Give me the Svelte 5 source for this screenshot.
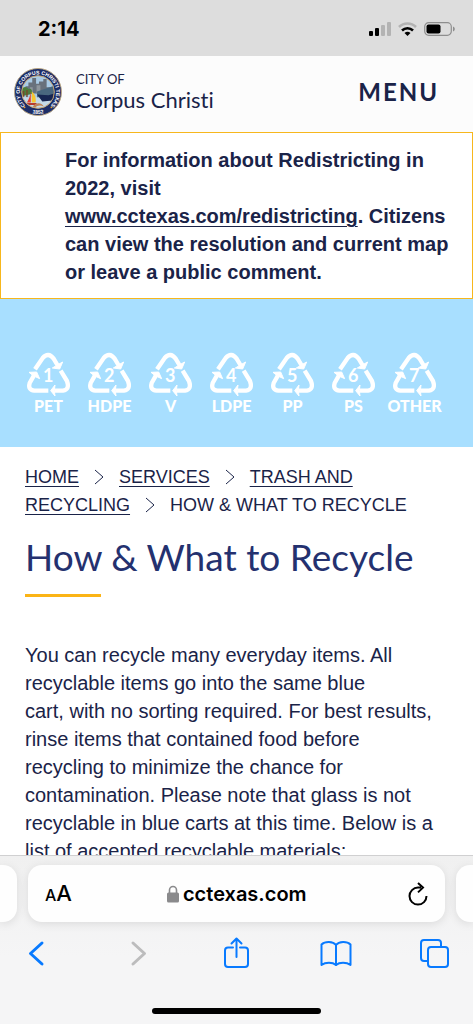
<script>
    const plastics = [
        { code: 1, label: "PET" },
        { code: 2, label: "HDPE" },
        { code: 3, label: "V" },
        { code: 4, label: "LDPE" },
        { code: 5, label: "PP" },
        { code: 6, label: "PS" },
        { code: 7, label: "OTHER" },
    ];

    let address = $state("cctexas.com");
</script>

{#snippet separator()}
    <svg class="separator" viewBox="0 0 10 16" aria-hidden="true">
        <path d="M1 1l8 7-8 7" />
    </svg>
{/snippet}

<div class="phone">
    <div class="status">
        <span class="time">2:14</span>
        <div class="indicators">
            <svg width="22" height="14" viewBox="0 0 22 14" aria-label="Signal">
                <rect x="0" y="9" width="4" height="5" rx="1" />
                <rect x="6" y="6" width="4" height="8" rx="1" />
                <rect class="faded" x="12" y="3" width="4" height="11" rx="1" />
                <rect class="faded" x="18" y="0" width="4" height="14" rx="1" />
            </svg>
            <svg width="19" height="14" viewBox="0 0 19 14" aria-label="Wi-Fi">
                <path class="wave faded-line" d="M1 5a12 12 0 0 1 17 0" />
                <path class="wave" d="M4 8.500a8 8 0 0 1 11 0" />
                <path d="M6.500 11a4.500 4.500 0 0 1 6 0L9.500 14z" />
            </svg>
            <svg width="31" height="14" viewBox="0 0 31 14" aria-label="Battery">
                <rect class="shell" x=".7" y=".7" width="26.6" height="12.6" rx="4" />
                <rect x="2.5" y="2.5" width="14" height="9" rx="2" />
                <path class="tip" d="M29 4.500c2.400 1 2.400 4 0 5z" />
            </svg>
        </div>
    </div>

    <main class="page">
        <header class="header">
            <a class="brand" href="/">
                <svg class="seal" viewBox="0 0 100 100" aria-label="City seal">
                    <defs>
                        <path id="ring-top" d="M22 77a38 38 0 1 1 56 0" />
                        <path id="ring-bottom" d="M30 91a46 46 0 0 0 40 0" />
                        <clipPath id="scene"><circle cx="50" cy="50" r="34" /></clipPath>
                    </defs>
                    <circle cx="50" cy="50" r="49" fill="#1d2e68" stroke="#b9a684" stroke-width="2" />
                    <g clip-path="url(#scene)">
                        <rect width="100" height="100" fill="#a9cbe6" />
                        <path d="M24 52V38h6v-8h8v-9h8v12h6v-5h9v-5h7v17h6l10 5v10z" fill="#68717c" />
                        <path d="M47 52V36h8v16zM33 52V40h6v12z" fill="#8e969d" />
                        <path d="M15 47c4-9 11-9 15-3 6-3 9 3 7 10l-22 5z" fill="#4c7d3d" />
                        <path d="M27 46v15M20 48v12" stroke="#754b2c" stroke-width="3" />
                        <path d="M48 49l36-12v22l-36 7z" fill="#49677f" />
                        <path d="M12 61h76v28H12z" fill="#c4d9e8" />
                        <path d="M48 55l24 2 16-5v15l-29 3z" fill="#172652" />
                        <path d="M35 49v23h-8c4-7 7-14 8-23z" fill="#e63b2f" />
                        <path d="M37 49c8 7 9 15 8 23h-8z" fill="#f7c62f" />
                        <path d="M26 73h22l-4 4H30z" fill="#b83a2d" />
                        <path d="M39 80c8-9 18-8 23 0-8-3-14-2-18 3z" fill="#bd8358" />
                    </g>
                    <circle cx="50" cy="50" r="34" fill="none" stroke="#c5a36d" stroke-width="2" />
                    <text class="seal-text"><textPath href="#ring-top" startOffset="50%">CITY OF CORPUS CHRISTI TEXAS</textPath></text>
                    <text class="seal-text"><textPath href="#ring-bottom" startOffset="50%">1852</textPath></text>
                    <circle cx="22" cy="82" r="2" fill="#e4a23a" />
                    <circle cx="78" cy="82" r="2" fill="#e4a23a" />
                </svg>
                <span class="name">
                    <span class="city-of">CITY OF</span>
                    <span class="city">Corpus Christi</span>
                </span>
            </a>
            <button class="menu">MENU</button>
        </header>

        <p class="notice">
            For information about Redistricting in 2022, visit <a href="https://www.cctexas.com/redistricting">www.cctexas.com/redistricting</a>. Citizens can view the resolution and current map or leave a public comment.
        </p>

        <ul class="plastics">
            {#each plastics as plastic}
                <li>
                    <svg class="triangle" viewBox="0 0 129 129">
                        <path class="arrow" d="M24 49L47 15Q64-4 80 17L93 39" />
                        <path class="head" d="M107 27L98 48 76 45 86 39 96 33z" />
                        <path class="arrow" d="M101 53L120 84Q129 110 108 113H82" />
                        <path class="head" d="M71 113L84 96 82 113 84 129z" />
                        <path class="arrow" d="M64 113H22Q2 111 8 90L21 67" />
                        <path class="head" d="M6 58L29 57 38 77 25 71 16 66z" />
                        <text x="64" y="86">{plastic.code}</text>
                    </svg>
                    <span>{plastic.label}</span>
                </li>
            {/each}
        </ul>

        <article class="content">
            <nav class="breadcrumbs" aria-label="Breadcrumb">
                <a href="/">HOME</a>{@render separator()}<a href="/services">SERVICES</a>{@render separator()}<a href="/services/trash">TRASH AND RECYCLING</a>{@render separator()}<span>HOW &amp; WHAT TO RECYCLE</span>
            </nav>
            <h1>How &amp; What to Recycle</h1>
            <p class="intro">
                You can recycle many everyday items. All recyclable items go into the same blue cart,&nbsp;with no sorting required. For best results, rinse items that contained food before recycling to minimize the chance for contamination. Please note that glass is not recyclable in blue carts at this time. Below is a list of accepted recyclable materials:
            </p>
        </article>
    </main>

    <footer class="browser">
        <div class="tabs">
            <div class="side left"></div>
            <div class="address">
                <button class="text-size" aria-label="Page settings"><small>A</small>A</button>
                <label class="location">
                    <svg width="12" height="18" viewBox="0 0 12 18" aria-label="Secure">
                        <path d="M2.500 8V5a3.500 3.500 0 0 1 7 0v3" fill="none" stroke="#8a8a8c" stroke-width="1.600" />
                        <rect y="7.500" width="12" height="10" rx="1.500" fill="#8a8a8c" />
                    </svg>
                    <input type="text" aria-label="Address" bind:value={address} />
                </label>
                <button class="reload" aria-label="Reload">
                    <svg width="20" height="24" viewBox="0 0 20 24">
                        <path d="M13 5.600H10a8.500 8.500 0 1 0 8.500 8.500M10 1l5 4.600-5 4.800" />
                    </svg>
                </button>
            </div>
            <div class="side right"></div>
        </div>
        <div class="toolbar">
            <button aria-label="Back">
                <svg viewBox="0 0 32 32"><path class="chevron" d="M20 6L8.500 16.500 20 27" /></svg>
            </button>
            <button aria-label="Forward" disabled>
                <svg viewBox="0 0 32 32"><path class="chevron" d="M12 6l11.500 10.500L12 27" /></svg>
            </button>
            <button aria-label="Share">
                <svg viewBox="0 0 32 32"><path d="M12 10.500H7a3 3 0 0 0-3 3V27a3 3 0 0 0 3 3h17a3 3 0 0 0 3-3V13.500a3 3 0 0 0-3-3h-5M15.500 20V1.500M10.500 6.500l5-5 5 5" /></svg>
            </button>
            <button aria-label="Bookmarks">
                <svg viewBox="0 0 32 32"><path d="M16 8C13 4 5 4 1.500 7.500V28c4-3 11-3 14.500 0 3.500-3 10.500-3 14.500 0V7.500C27 4 19 4 16 8zV28" /><path d="M16 8v20" /></svg>
            </button>
            <button aria-label="Tabs">
                <svg viewBox="0 0 32 32"><path d="M9 24H5a3 3 0 0 1-3-3V6a3 3 0 0 1 3-3H19a3 3 0 0 1 3 3V10" /><rect x="9" y="10" width="20" height="20" rx="3" /></svg>
            </button>
        </div>
        <div class="home-bar"></div>
    </footer>
</div>

<style>
    :global(body) {
        margin: 0;
        background: #fff;
    }

    .phone {
        display: flex;
        flex-direction: column;
        height: 100vh;
        overflow: hidden;
        color: #1a2348;
        font-family: "Liberation Sans", Arial, sans-serif;
        font-size: 20px;
        line-height: 28px;
    }

    button {
        padding: 0;
        border: none;
        background: none;
        color: inherit;
        font: inherit;
        cursor: pointer;
    }

    a {
        color: inherit;
        text-decoration-thickness: 1px;
        text-underline-offset: 3px;
    }

    .status {
        display: flex;
        flex-shrink: 0;
        align-items: center;
        justify-content: space-between;
        height: 56px;
        padding: 2px 18px 0 38px;
        box-sizing: border-box;
        background: #ddd;
        color: #000;
    }

    .time {
        font: 700 20px/24px Inter, sans-serif;
    }

    .indicators {
        display: flex;
        gap: 7px;
    }

    .faded {
        fill: #b3b3b3;
    }

    .wave {
        fill: none;
        stroke: #000;
        stroke-width: 2.6;
    }

    .faded-line {
        stroke: #b3b3b3;
    }

    .shell {
        fill: none;
        stroke: #8e8e8e;
        stroke-width: 1.2;
    }

    .tip {
        fill: #8e8e8e;
    }

    .page {
        flex: 1;
        min-height: 0;
        overflow: hidden;
    }

    .header {
        display: flex;
        align-items: center;
        justify-content: space-between;
        height: 76px;
        padding: 0 34px 4px 14px;
        box-sizing: border-box;
        background: #fcfcfc;
        font-family: Lato, sans-serif;
        font-variant-ligatures: none;
    }

    .brand {
        display: flex;
        align-items: center;
        gap: 14px;
        text-decoration: none;
    }

    .seal {
        width: 48px;
        height: 48px;
    }

    .seal-text {
        fill: #fff;
        font: 700 11px "Liberation Sans", sans-serif;
        text-anchor: middle;
    }

    .name {
        display: flex;
        flex-direction: column;
    }

    .city-of {
        font-size: 13px;
        line-height: 16px;
    }

    .city {
        font-size: 22px;
        line-height: 26px;
    }

    .menu {
        font-size: 24px;
        font-weight: 700;
        letter-spacing: 2px;
    }

    .notice {
        margin: 0;
        padding: 13px 18px 12px 64px;
        border: 1px solid #f7b71d;
        background: #fff;
        font-weight: 700;
    }

    .plastics {
        display: grid;
        grid-template-columns: repeat(7, 1fr);
        margin: 0;
        padding: 54px 28px 32px 18px;
        background: #a8dfff;
        color: #fff;
        font: 900 16px/18px Lato, sans-serif;
        list-style: none;
    }

    .plastics li {
        display: flex;
        flex-direction: column;
        align-items: center;
        gap: 1px;
    }

    .triangle {
        width: 43px;
        height: 43px;
        overflow: visible;
    }

    .triangle text {
        fill: #fff;
        font: 700 54px Lato, sans-serif;
        text-anchor: middle;
    }

    .arrow {
        fill: none;
        stroke: #fff;
        stroke-width: 13;
    }

    .head {
        fill: #fff;
        stroke: #fff;
        stroke-width: 3;
    }

    .content {
        padding: 16px 33px 0 25px;
    }

    .breadcrumbs {
        font-size: 18px;
    }

    .separator {
        width: 10px;
        height: 16px;
        margin: 0 15px;
        vertical-align: -2px;
        fill: none;
        stroke: #1a2348;
    }

    h1 {
        margin: 16px 0 44px;
        color: #24316f;
        font: 400 37px/44px Lato, sans-serif;
    }

    h1::after {
        display: block;
        width: 76px;
        height: 3px;
        margin-top: 15px;
        background: #fbb416;
        content: "";
    }

    .intro {
        margin: 0;
    }

    .browser {
        display: flex;
        flex-direction: column;
        flex-shrink: 0;
        align-items: center;
        border-top: 1px solid #d0d0d1;
        background: linear-gradient(#f0f0f0, #f5f5f6 60%);
        color: #000;
    }

    .tabs {
        display: flex;
        gap: 11px;
        align-self: stretch;
        padding: 9px 0 15px;
    }

    .side,
    .address {
        height: 57px;
        background: #fefefe;
        box-shadow: 0 2px 10px rgba(0, 0, 0, 0.1);
    }

    .side {
        width: 17px;
    }

    .left {
        border-radius: 0 14px 14px 0;
    }

    .right {
        border-radius: 14px 0 0 14px;
    }

    .address {
        display: flex;
        flex: 1;
        align-items: center;
        justify-content: space-between;
        padding: 0 17px;
        box-sizing: border-box;
        border-radius: 14px;
        font: 600 20px/24px Inter, sans-serif;
    }

    .text-size {
        font-size: 22px;
        font-weight: 500;
    }

    .text-size small {
        font-size: 16px;
    }

    .location {
        display: flex;
        align-items: center;
        gap: 4px;
    }

    .location input {
        width: 130px;
        padding: 0;
        border: none;
        outline: none;
        background: none;
        color: inherit;
        font: inherit;
    }

    .reload svg {
        display: block;
        fill: none;
        stroke: #000;
        stroke-width: 2;
    }

    .toolbar {
        display: flex;
        align-self: stretch;
        justify-content: space-between;
        padding: 0 22px;
    }

    .toolbar button {
        color: #087aff;
    }

    .toolbar button:disabled {
        color: #bcbcbd;
    }

    .toolbar svg {
        display: block;
        width: 32px;
        height: 32px;
        fill: none;
        stroke: currentColor;
        stroke-width: 2;
        stroke-linecap: round;
        stroke-linejoin: round;
    }

    .toolbar .chevron {
        stroke-width: 3;
    }

    .home-bar {
        width: 169px;
        height: 6px;
        margin: 39px 0 10px;
        border-radius: 3px;
        background: #000;
    }
</style>
